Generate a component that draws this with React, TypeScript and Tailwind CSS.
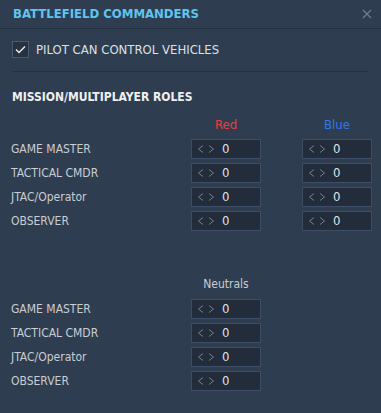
import React from 'react';

const roles = ['GAME MASTER', 'TACTICAL CMDR', 'JTAC/Operator', 'OBSERVER'];

function Counter() {
  return (
    <div className="h-[20px] w-[70px] flex items-center bg-[#222c3a] border border-[#3c4d64] pl-[5px]">
      <svg width="7" height="10" viewBox="0 0 7 10">
        <path d="M6 1.5 L1.5 5 L6 8.5" stroke="#737f8e" strokeWidth="1" fill="none" />
      </svg>
      <svg width="7" height="10" viewBox="0 0 7 10" className="ml-[4px]">
        <path d="M1 1.5 L5.5 5 L1 8.5" stroke="#737f8e" strokeWidth="1" fill="none" />
      </svg>
      <span className="text-[#dfe3e8] text-[13px] leading-none ml-[7px]">0</span>
    </div>
  );
}

export default function App() {
  return (
    <div
      className="w-[381px] h-[413px] bg-[#2e3d50] flex flex-col"
      style={{ fontFamily: '"DejaVu Sans Condensed", "DejaVu Sans", sans-serif', fontStretch: 'condensed' }}
    >
      {/* header */}
      <div className="h-[29px] flex items-center justify-between pl-[13px] pr-[9px] border-b border-[#233040]">
        <span className="text-[#5ec5ee] font-bold text-[13px]">BATTLEFIELD COMMANDERS</span>
        <svg width="10" height="10" viewBox="0 0 10 10" className="mb-[1px]">
          <path d="M1 1 L9 9 M9 1 L1 9" stroke="#6d7d92" strokeWidth="1.2" />
        </svg>
      </div>

      {/* checkbox */}
      <div className="mx-[12px] pt-[11px] pb-[11px] border-b border-[#243142] flex items-center">
        <div className="w-[17px] h-[17px] border border-[#4a5a70] bg-[#26323f] flex items-center justify-center">
          <svg width="11" height="9" viewBox="0 0 11 9">
            <path d="M1 4.5 L4 7.5 L10 1.5" stroke="#e6e9ec" strokeWidth="1.5" fill="none" />
          </svg>
        </div>
        <span className="ml-[7px] text-[#dde1e5] text-[13px]">PILOT CAN CONTROL VEHICLES</span>
      </div>

      <div className="pl-[12px] pt-[16px] text-[#eef0f2] font-bold text-[12px]">MISSION/MULTIPLAYER ROLES</div>

      {/* red / blue */}
      <div className="grid grid-cols-[180px_70px_41px_70px] pl-[11px] mt-[10px] gap-y-[4px] items-center">
        <div />
        <div className="text-center text-[#e8403f] text-[13px] h-[17px] leading-[17px] mb-[2px]">Red</div>
        <div />
        <div className="text-center text-[#2f78f0] text-[13px] h-[17px] leading-[17px] mb-[2px]">Blue</div>
        {roles.map((r) => (
          <React.Fragment key={r}>
            <div className="text-[#c9ced4] text-[12px] leading-[20px]">{r}</div>
            <Counter />
            <div />
            <Counter />
          </React.Fragment>
        ))}
      </div>

      {/* neutrals */}
      <div className="grid grid-cols-[180px_70px] pl-[11px] mt-[44px] gap-y-[4px] items-center">
        <div />
        <div className="text-center text-[#c9ced4] text-[12px] h-[18px] leading-[18px] mb-[2px]">Neutrals</div>
        {roles.map((r) => (
          <React.Fragment key={r}>
            <div className="text-[#c9ced4] text-[12px] leading-[20px]">{r}</div>
            <Counter />
          </React.Fragment>
        ))}
      </div>
    </div>
  );
}
